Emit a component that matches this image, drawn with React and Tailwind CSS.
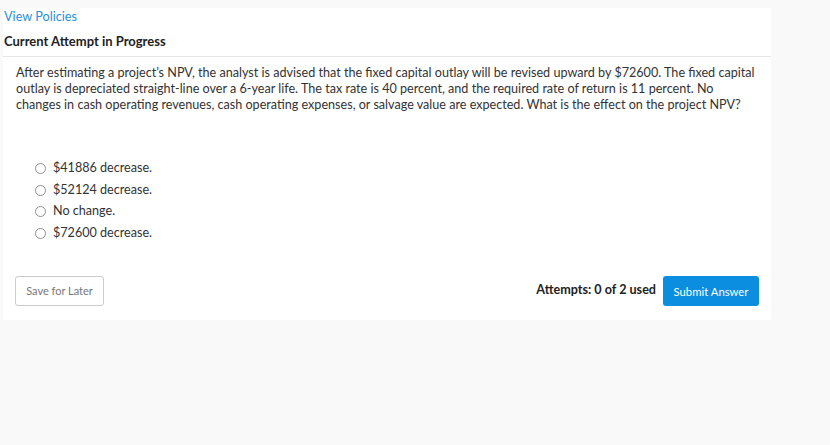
import React from "react";

const options = [
  "$41886 decrease.",
  "$52124 decrease.",
  "No change.",
  "$72600 decrease.",
];

export default function App() {
  return (
    <div
      className="w-[830px] h-[445px] bg-[#f9f9f9] pt-[8px] pl-[3px] text-[#333333]"
      style={{ fontFamily: 'Lato, "Open Sans", sans-serif' }}
    >
      <div className="w-[768px] bg-white">
        <div className="pl-[1px] text-[12.7px] leading-[16px] text-[#2a8fdd]">
          View Policies
        </div>
        <div className="pl-[1px] pt-[9px] pb-[7px] text-[13px] leading-[16px] font-bold text-[#222222] border-b border-[#e6e6e6]">
          Current Attempt in Progress
        </div>
        <div className="pl-[13px] pt-[8px]">
          <p className="w-[744px] text-[12.6px] leading-[16px] text-[#333333]">
            After estimating a project’s NPV, the analyst is advised that the fixed capital outlay will be revised upward by $72600. The fixed capital outlay is depreciated straight-line over a 6-year life. The tax rate is 40 percent, and the required rate of return is 11 percent. No changes in cash operating revenues, cash operating expenses, or salvage value are expected. What is the effect on the project NPV?
          </p>
          <div className="pt-[45px] pl-[19px] flex flex-col">
            {options.map((o) => (
              <label key={o} className="flex items-center h-[21.5px] text-[12.6px]">
                <span className="w-[11px] h-[11px] rounded-full border border-[#8f8f8f] bg-white mr-[7px]" />
                <span>{o}</span>
              </label>
            ))}
          </div>
        </div>
        <div className="flex items-center justify-between px-[12px] pt-[32px] pb-[14px]">
          <button className="h-[30px] w-[89px] border border-[#cccccc] rounded-[3px] bg-white text-[11px] text-[#777777]">
            Save for Later
          </button>
          <div className="flex items-center">
            <span className="text-[12.6px] font-bold text-[#222222] mr-[7px] -mt-[2px]">
              Attempts: 0 of 2 used
            </span>
            <button className="h-[30px] w-[96px] rounded-[3px] bg-[#0b8de0] text-white text-[11.3px] pt-[2px]">
              Submit Answer
            </button>
          </div>
        </div>
      </div>
    </div>
  );
}
